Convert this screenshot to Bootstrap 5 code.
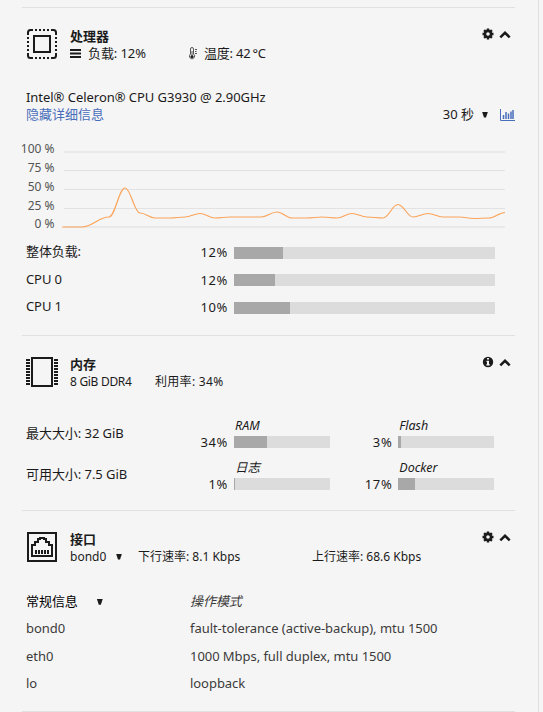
<!DOCTYPE html>
<html lang="zh-CN">
<head>
    <meta charset="UTF-8">
    <meta name="viewport" content="width=device-width, initial-scale=1.0">
    <link rel="stylesheet" href="https://cdn.jsdelivr.net/npm/bootstrap@5.3.3/dist/css/bootstrap.min.css">
    <title>仪表板</title>
    <style>
        body { background: #f5f5f5; color: #1c1b1b; font: 13px/17px "Noto Sans", "Noto Sans CJK SC", sans-serif; overflow: hidden; white-space: nowrap; }
        svg { display: block; flex: none; }
        .dash { width: 539px; height: 712px; padding: 7px 23px 0 22px; border-right: 1px solid #e0e0e0; }
        .tile { border-top: 1px solid #e0e0e0; padding-left: 4px; }
        .tile-cpu { height: 328px; }
        .tile-mem { height: 175px; }
        .tile-net { height: 202px; border-bottom: 1px solid #e0e0e0; }
        .tile-head { height: 32px; margin-top: 20px; }
        .tile-text { width: 424px; padding-left: 12px; }
        .tile-title { font-weight: 600; font-size: 13px; }
        .tile-net .tile-text, .tile-mem .tile-text { font-size: 12px; }
        .tools { gap: 5px; }
        .line17 { height: 17px; }
        .load-cell { width: 101px; margin-left: 7px; letter-spacing: -.1px; }
        .temp-cell { margin-left: 7px; letter-spacing: -.2px; }
        .usage-name { width: 85px; letter-spacing: -.3px; }
        .usage-value { letter-spacing: .3px; }
        .net-name { width: 68px; }
        .net-down { width: 174px; }
        .model { margin-top: 29px; letter-spacing: -.04px; }
        .detail-link, .detail-link:hover { color: #486dba; text-decoration: none; }
        .drop { width: 6px; height: 6px; background: #1c1b1b; clip-path: polygon(0 0, 100% 0, 67% 100%, 33% 100%); }
        .chart { margin: 17px 0 0 -8px; }
        .chart text { font-size: 12px; fill: #545454; text-anchor: end; }
        .cpu-rows { margin-top: 3px; }
        .cpu-row { height: 27px; }
        .cpu-row:nth-child(2) { height: 28px; }
        .cpu-label { width: 160px; letter-spacing: -.1px; position: relative; top: -1px; }
        .pct { width: 42px; text-align: right; letter-spacing: .6px; margin-right: -.6px; }
        .meter { height: 12px; width: 261px; margin-left: 6.600px; background: #dcdcdc; border-radius: 0; }
        .meter .progress-bar { background: #a8a8a8; }
        .meter-sm { width: 96px; }
        .mem-grid { margin-top: 29px; }
        .mem-row { height: 42px; }
        .mem-info { width: 160px; padding-top: 8px; letter-spacing: -.06px; }
        .mem-row:last-child .mem-info { padding-top: 7px; }
        .mem-cell { width: 164.300px; }
        .mem-name { height: 17px; padding-left: 49px; font-style: italic; font-size: 12.5px; }
        .mem-bar { height: 14px; margin-top: 1px; }
        .net-table { margin-top: 25px; letter-spacing: -.05px; }
        .net-row { height: 27.3px; color: #3c3b3b; }
        .net-col { width: 164px; }
        .net-drop { margin-left: 19px; }
    </style>
</head>
<body>
    <!-- shared icons -->
    <svg width="0" height="0" class="position-absolute">
        <symbol id="i-gear" viewBox="0 0 12 12">
            <circle cx="6" cy="6" r="3.1" fill="none" stroke="#1c1b1b" stroke-width="2.6"/>
            <path d="M6 .5v2M6 9.500v2M.5 6h2M9.500 6h2M2.100 2.100l1.400 1.400M8.500 8.500l1.400 1.400M2.100 9.900l1.400-1.400M8.500 3.500l1.400-1.400" stroke="#1c1b1b" stroke-width="2.4"/>
        </symbol>
        <symbol id="i-up" viewBox="0 0 12 12">
            <path d="M1.300 9.300L6 4.800l4.700 4.500" fill="none" stroke="#1c1b1b" stroke-width="2.500"/>
        </symbol>
    </svg>

    <div class="dash">
        <section class="tile tile-cpu d-flex flex-column">
            <div class="tile-head d-flex">
                <svg width="32" height="32" viewBox="0 0 32 32" fill="none" stroke="#1c1b1b">
                    <path d="M2 7V4.500Q2 2 4.500 2H7M25 2h2.500Q30 2 30 4.500V7M30 25v2.500Q30 30 27.500 30H25M7 30H4.500Q2 30 2 27.500V25" stroke-width="2"/>
                    <path d="M9 2h14M9 30h14M2 9v14M30 9v14" stroke-width="2" stroke-dasharray="2 2"/>
                    <rect x="8" y="8" width="16" height="16" stroke-width="2"/>
                </svg>
                <div class="tile-text">
                    <div class="tile-title">处理器</div>
                    <div class="line17 d-flex align-items-center">
                        <svg width="11" height="11" viewBox="0 0 11 11"><path d="M0 2h11M0 5.500h11M0 9h11" stroke="#1c1b1b" stroke-width="1.800"/></svg>
                        <span class="load-cell">负载: 12%</span>
                        <svg width="8" height="13" viewBox="0 0 8 13" fill="none" stroke="#555">
                            <path d="M1.500 7V2a1.500 1.500 0 0 1 3 0v5a2.600 2.600 0 1 1-3 0z"/>
                            <circle cx="3" cy="9.500" r="1.500" fill="#1c1b1b" stroke="none"/>
                            <path d="M3 4v5M6 2.500h2M6 4.500h1.500M6 6.500h2"/>
                        </svg>
                        <span class="temp-cell">温度: 42&#8201;°C</span>
                    </div>
                </div>
                <div class="tools d-flex">
                    <svg width="12" height="12"><use href="#i-gear"/></svg>
                    <svg width="12" height="12"><use href="#i-up"/></svg>
                </div>
            </div>
            <div class="model">Intel® Celeron® CPU G3930 @ 2.90GHz</div>
            <div class="line17 d-flex align-items-center">
                <a href="#" class="detail-link me-auto">隐藏详细信息</a>
                <span>30 秒</span>
                <span class="drop ms-2 me-2"></span>
                <svg class="ms-1" width="15" height="12" viewBox="0 0 15 12" fill="none" stroke="#486dba">
                    <path d="M.5 0v11.500H15"/>
                    <path d="M3.500 6v4M6 3v7M8.500 4.500V10M11 2.500V10M13 1v9" stroke-width="1.500"/>
                </svg>
            </div>
            <svg class="chart" width="490" height="96" viewBox="18 140 490 96">
                <path d="M64 152H505M64 227H505" stroke="#e9e9e9" stroke-width="2"/>
                <path d="M64 170.500H505M64 189.500H505M64 208.500H505" stroke="#e2e2e2"/>
                <text x="54.500" y="153">100 %</text>
                <text x="54.500" y="172">75 %</text>
                <text x="54.500" y="191">50 %</text>
                <text x="54.500" y="210">25 %</text>
                <text x="54.500" y="228">0 %</text>
                <path id="cpu-line" fill="none" stroke="#fba45b" stroke-width="1.200"/>
            </svg>
            <div class="cpu-rows">
                <div class="cpu-row d-flex align-items-center"><span class="cpu-label">整体负载:</span><span class="pct">12%</span><div class="progress meter"><div class="progress-bar" style="width: 18.8%"></div></div></div>
                <div class="cpu-row d-flex align-items-center"><span class="cpu-label">CPU 0</span><span class="pct">12%</span><div class="progress meter"><div class="progress-bar" style="width: 15.7%"></div></div></div>
                <div class="cpu-row d-flex align-items-center"><span class="cpu-label">CPU 1</span><span class="pct">10%</span><div class="progress meter"><div class="progress-bar" style="width: 21.5%"></div></div></div>
            </div>
        </section>

        <section class="tile tile-mem">
            <div class="tile-head d-flex">
                <svg width="32" height="32" viewBox="0 0 32 32" fill="none" stroke="#1c1b1b" stroke-width="2">
                    <rect x="6" y="2" width="20" height="28"/>
                    <path d="M2 3v27M30 3v27" stroke-width="4" stroke-dasharray="2 1"/>
                </svg>
                <div class="tile-text">
                    <div class="tile-title">内存</div>
                    <div class="line17 d-flex align-items-center"><span class="usage-name">8 GiB DDR4</span><span class="usage-value">利用率: 34%</span></div>
                </div>
                <div class="tools d-flex">
                    <svg width="12" height="12" viewBox="0 0 12 12">
                        <circle cx="6" cy="6" r="5.200" fill="#1c1b1b"/>
                        <path d="M5 2h2v1.500H5zM4.500 4.800H7v3.400h.8v1.300H4.300V8.200H5V6h-.5z" fill="#f5f5f5"/>
                    </svg>
                    <svg width="12" height="12"><use href="#i-up"/></svg>
                </div>
            </div>
            <div class="mem-grid">
                <div class="mem-row d-flex">
                    <div class="mem-info">最大大小: 32 GiB</div>
                    <div class="mem-cell"><div class="mem-name">RAM</div><div class="mem-bar d-flex align-items-center"><span class="pct">34%</span><div class="progress meter meter-sm"><div class="progress-bar" style="width: 34%"></div></div></div></div>
                    <div class="mem-cell"><div class="mem-name">Flash</div><div class="mem-bar d-flex align-items-center"><span class="pct">3%</span><div class="progress meter meter-sm"><div class="progress-bar" style="width: 3%"></div></div></div></div>
                </div>
                <div class="mem-row d-flex">
                    <div class="mem-info">可用大小: 7.5 GiB</div>
                    <div class="mem-cell"><div class="mem-name">日志</div><div class="mem-bar d-flex align-items-center"><span class="pct">1%</span><div class="progress meter meter-sm"><div class="progress-bar" style="width: 1%"></div></div></div></div>
                    <div class="mem-cell"><div class="mem-name">Docker</div><div class="mem-bar d-flex align-items-center"><span class="pct">17%</span><div class="progress meter meter-sm"><div class="progress-bar" style="width: 17%"></div></div></div></div>
                </div>
            </div>
        </section>

        <section class="tile tile-net">
            <div class="tile-head d-flex">
                <svg width="32" height="32" viewBox="0 0 32 32" fill="none" stroke="#1c1b1b" stroke-width="2">
                    <rect x="2" y="2" width="28" height="28"/>
                    <path d="M6 25V14h3v-3h3V8h2V7h4v1h2v3h3v3h3v11z"/>
                    <path d="M9 21h14" stroke-width="4" stroke-dasharray="2 1"/>
                </svg>
                <div class="tile-text">
                    <div class="tile-title">接口</div>
                    <div class="line17 d-flex align-items-center">
                        <div class="net-name d-flex align-items-center"><span>bond0</span><span class="drop ms-auto me-3"></span></div>
                        <span class="net-down">下行速率: 8.1 Kbps</span>
                        <span>上行速率: 68.6 Kbps</span>
                    </div>
                </div>
                <div class="tools d-flex">
                    <svg width="12" height="12"><use href="#i-gear"/></svg>
                    <svg width="12" height="12"><use href="#i-up"/></svg>
                </div>
            </div>
            <div class="net-table">
                <div class="net-row d-flex align-items-center"><div class="net-col d-flex align-items-center text-black"><span>常规信息</span><span class="drop net-drop"></span></div><em>操作模式</em></div>
                <div class="net-row d-flex align-items-center"><span class="net-col">bond0</span><span>fault-tolerance (active-backup), mtu 1500</span></div>
                <div class="net-row d-flex align-items-center"><span class="net-col">eth0</span><span>1000 Mbps, full duplex, mtu 1500</span></div>
                <div class="net-row d-flex align-items-center"><span class="net-col">lo</span><span>loopback</span></div>
            </div>
        </section>
    </div>

    <script src="https://cdn.jsdelivr.net/npm/bootstrap@5.3.3/dist/js/bootstrap.bundle.min.js"></script>
    <script>
        // load samples: x, y inside the chart
        const points = [[62, 227], [82, 227], [109, 217], [125, 188], [140, 213], [155, 218], [170, 218], [185, 217], [200, 213.5], [215, 218], [230, 217], [246, 217], [261, 217], [277, 212], [292, 218], [307, 218], [322, 217], [337, 218], [352, 213.5], [367, 217], [383, 218], [398, 204.5], [413, 217], [428, 213.5], [443, 217], [459, 217], [474, 218.5], [489, 218], [505, 212.5]];
        let d = `M${points[0][0]} ${points[0][1]}`;
        for (let i = 1; i < points.length; i++) {
            const [x0, y0] = points[i - 1];
            const [x1, y1] = points[i];
            const step = (x1 - x0) * 0.38;
            d += `C${x0 + step} ${y0} ${x1 - step} ${y1} ${x1} ${y1}`;
        }
        document.getElementById('cpu-line').setAttribute('d', d);
    </script>
</body>
</html>
